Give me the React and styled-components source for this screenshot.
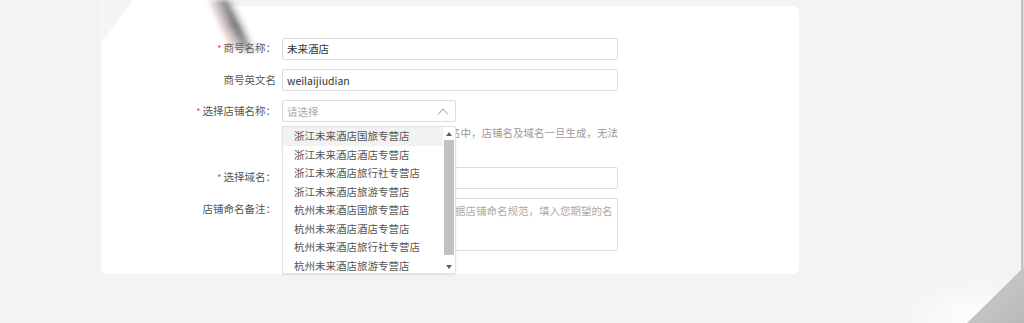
import React from 'react';
import styled, { createGlobalStyle } from 'styled-components';

const GlobalStyle = createGlobalStyle`
  html, body {
    margin: 0;
    padding: 0;
    background: #f2f3f5;
  }
  body {
    font-family: "Noto Sans CJK SC", "Noto Sans", sans-serif;
    font-size: 10.5px;
    color: #333;
  }
`;

const Page = styled.div`
  position: relative;
  width: 1024px;
  height: 323px;
  box-sizing: border-box;
  padding: 6px 0 0 101px;
  background: #f2f3f5;
  box-shadow: inset -1px 0 0 #dcdcdc, inset -3px 0 0 #c2c2c2;
  overflow: hidden;
`;

const Card = styled.div`
  width: 698px;
  height: 268px;
  box-sizing: border-box;
  padding-top: 31px;
  background: #fff;
  border-radius: 6px;
`;

const Form = styled.div`
  display: flex;
  flex-direction: column;
  gap: 9px;
`;

const Row = styled.div`
  display: grid;
  grid-template-columns: 175px 336px;
  column-gap: 6px;
  align-items: ${(p) => (p.top ? 'start' : 'center')};
`;

const Label = styled.div`
  text-align: right;
  color: #555;
  line-height: 22px;
  white-space: nowrap;
`;

const Star = styled.span`
  color: #f04134;
  margin-right: 2px;
  font-size: 9px;
`;

const Field = styled.div`
  position: relative;
  display: flex;
  flex-direction: column;
`;

const Input = styled.div`
  width: ${(p) => p.width || 336}px;
  height: 22px;
  box-sizing: border-box;
  border: 1px solid #dcdcdc;
  border-radius: 2px;
  padding: 0 4px;
  display: flex;
  align-items: center;
  justify-content: space-between;
  color: ${(p) => (p.placeholder ? '#aaa' : '#333')};
  background: #fff;
`;

const TextArea = styled.div`
  height: 53px;
  box-sizing: border-box;
  border: 1px solid #dcdcdc;
  border-radius: 2px;
  padding: 4px 4px;
  line-height: 16px;
  color: #aaa;
`;

const Hint = styled.div`
  margin-top: 3px;
  line-height: 16px;
  color: #999;
`;

const Dropdown = styled.div`
  position: absolute;
  top: 26px;
  left: 0;
  width: 174px;
  height: 148px;
  box-sizing: border-box;
  border: 1px solid #e2e2e2;
  background: #fff;
  display: flex;
  box-shadow: 0 1px 2px rgba(0, 0, 0, 0.08);
  z-index: 2;
`;

const List = styled.div`
  flex: 1;
  overflow: hidden;
`;

const Option = styled.div`
  height: 18.5px;
  line-height: 18.5px;
  padding-left: 11px;
  color: #555;
  white-space: nowrap;
  background: ${(p) => (p.active ? '#f2f2f2' : 'transparent')};
`;

const ScrollBar = styled.div`
  width: 12px;
  display: flex;
  flex-direction: column;
  align-items: center;
  background: #fff;
`;

const Arrow = styled.div`
  height: 13px;
  display: flex;
  align-items: center;
  justify-content: center;
`;

const Thumb = styled.div`
  width: 10px;
  height: 115px;
  background: #c1c1c1;
`;

const Track = styled.div`
  flex: 1;
  display: flex;
  align-items: flex-start;
  justify-content: center;
`;

const Curl = styled.svg`
  position: absolute;
  pointer-events: none;
  z-index: 5;
`;

const options = [
  '浙江未来酒店国旅专营店',
  '浙江未来酒店酒店专营店',
  '浙江未来酒店旅行社专营店',
  '浙江未来酒店旅游专营店',
  '杭州未来酒店国旅专营店',
  '杭州未来酒店酒店专营店',
  '杭州未来酒店旅行社专营店',
  '杭州未来酒店旅游专营店',
];

function Triangle({ up }) {
  return (
    <svg width="6" height="4" viewBox="0 0 6 4">
      <polygon points={up ? '0,4 3,0 6,4' : '0,0 6,0 3,4'} fill="#606060" />
    </svg>
  );
}

export default function App() {
  return (
    <>
      <GlobalStyle />
      <Page>
        <Card>
          <Form>
            <Row>
              <Label><Star>*</Star>商号名称：</Label>
              <Input>未来酒店</Input>
            </Row>
            <Row>
              <Label>商号英文名</Label>
              <Input>weilaijiudian</Input>
            </Row>
            <Row top>
              <Label><Star>*</Star>选择店铺名称：</Label>
              <Field>
                <Input width={174} placeholder="true">
                  请选择
                  <svg width="12" height="7" viewBox="0 0 12 7" style={{ marginRight: 2 }}>
                    <polyline points="1,6.5 6,1 11,6.5" fill="none" stroke="#999" strokeWidth="1" />
                  </svg>
                </Input>
                <Hint>选择的店铺名称将会用于生成店铺域名中，店铺名及域名一旦生成，无法修改，请谨慎选择。</Hint>
                <Dropdown>
                  <List>
                    {options.map((o, i) => (
                      <Option key={o} active={i === 0}>{o}</Option>
                    ))}
                  </List>
                  <ScrollBar>
                    <Arrow><Triangle up /></Arrow>
                    <Track><Thumb /></Track>
                    <Arrow><Triangle /></Arrow>
                  </ScrollBar>
                </Dropdown>
              </Field>
            </Row>
            <Row>
              <Label><Star>*</Star>选择域名：</Label>
              <Input />
            </Row>
            <Row top>
              <Label>店铺命名备注：</Label>
              <TextArea>若以上店铺名称均不符合需求，请根据店铺命名规范，填入您期望的名称</TextArea>
            </Row>
          </Form>
        </Card>

        <Curl width="300" height="70" style={{ left: 0, top: 0 }} viewBox="0 0 300 70">
          <defs>
            <linearGradient id="streak" gradientUnits="userSpaceOnUse" x1="219" y1="27" x2="244" y2="15">
              <stop offset="0" stopColor="#e8a8a8" stopOpacity="0.3" />
              <stop offset="0.3" stopColor="#8a8080" stopOpacity="0.6" />
              <stop offset="0.6" stopColor="#4a4a4a" stopOpacity="0.85" />
              <stop offset="1" stopColor="#ffffff" stopOpacity="0" />
            </linearGradient>
            <linearGradient id="fade" x1="0" y1="0" x2="0" y2="1">
              <stop offset="0" stopColor="#fff" stopOpacity="0.75" />
              <stop offset="0.45" stopColor="#fff" stopOpacity="1" />
              <stop offset="0.75" stopColor="#fff" stopOpacity="0.75" />
              <stop offset="1" stopColor="#fff" stopOpacity="0" />
            </linearGradient>
            <mask id="fadeMask">
              <rect x="0" y="0" width="300" height="58" fill="url(#fade)" />
            </mask>
            <filter id="soft">
              <feGaussianBlur stdDeviation="2" />
            </filter>
          </defs>
          <polygon points="99,0 99,42 102,42 133,0" fill="#f4f5f7" />
          <polygon points="133,0 216,0 222,7 128,7" fill="#fff" />
          <g mask="url(#fadeMask)">
            <polygon points="208,0 236,0 266,54 232,54" fill="url(#streak)" filter="url(#soft)" />
          </g>
        </Curl>

        <Curl width="170" height="80" style={{ right: 0, bottom: 0 }} viewBox="0 0 170 80">
          <defs>
            <radialGradient id="haze" cx="0.7" cy="0.9" r="0.6">
              <stop offset="0" stopColor="#fff" stopOpacity="0.9" />
              <stop offset="1" stopColor="#fff" stopOpacity="0" />
            </radialGradient>
            <linearGradient id="fold" x1="0" y1="0" x2="1" y2="1">
              <stop offset="0" stopColor="#cfcfcf" />
              <stop offset="1" stopColor="#b9b9b9" />
            </linearGradient>
          </defs>
          <rect x="20" y="10" width="150" height="70" fill="url(#haze)" />
          <polygon points="170,24 170,80 113,80" fill="url(#fold)" />
        </Curl>
      </Page>
    </>
  );
}
